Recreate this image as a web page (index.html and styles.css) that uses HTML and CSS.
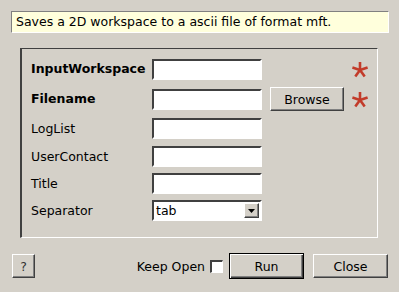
FILE: index.html
```html
<!DOCTYPE html>
<html>
<head>
<meta charset="utf-8">
<link rel="stylesheet" href="styles.css">
</head>
<body>
<div class="dialog">
  <div class="tip">Saves a 2D workspace to a ascii file of format mft.</div>
  <div class="group">
    <div class="grid">
      <div class="label bold">InputWorkspace</div>
      <div class="field"><div class="input"></div></div>
      <div></div>
      <div class="req"><svg width="18" height="17" viewBox="-9 -9 18 17"><g stroke="#c23b2a" stroke-width="2.6" stroke-linecap="butt"><line x1="0" y1="0" x2="0" y2="-8"/><line x1="0" y1="0" x2="7.6" y2="-2.5"/><line x1="0" y1="0" x2="4.7" y2="6.5"/><line x1="0" y1="0" x2="-4.7" y2="6.5"/><line x1="0" y1="0" x2="-7.6" y2="-2.5"/></g></svg></div>

      <div class="label bold">Filename</div>
      <div class="field"><div class="input"></div></div>
      <div class="cell"><div class="btn browse">Browse</div></div>
      <div class="req"><svg width="18" height="17" viewBox="-9 -9 18 17"><g stroke="#c23b2a" stroke-width="2.6" stroke-linecap="butt"><line x1="0" y1="0" x2="0" y2="-8"/><line x1="0" y1="0" x2="7.6" y2="-2.5"/><line x1="0" y1="0" x2="4.7" y2="6.5"/><line x1="0" y1="0" x2="-4.7" y2="6.5"/><line x1="0" y1="0" x2="-7.6" y2="-2.5"/></g></svg></div>

      <div class="label">LogList</div>
      <div class="field"><div class="input"></div></div>
      <div></div><div></div>

      <div class="label">UserContact</div>
      <div class="field"><div class="input"></div></div>
      <div></div><div></div>

      <div class="label">Title</div>
      <div class="field"><div class="input"></div></div>
      <div></div><div></div>

      <div class="label">Separator</div>
      <div class="field"><div class="input combo"><span class="val">tab</span><span class="arrow"><svg width="7" height="4" viewBox="0 0 7 4"><polygon points="0,0 7,0 3.5,4" fill="#000"/></svg></span></div></div>
      <div></div><div></div>
    </div>
  </div>
  <div class="bottom">
    <div class="btn help">?</div>
    <div class="spacer"></div>
    <div class="keep">Keep Open</div>
    <div class="check"></div>
    <div class="btn run">Run</div>
    <div class="btn close">Close</div>
  </div>
</div>
</body>
</html>
```
FILE: styles.css
```css
html, body {
  margin: 0;
  padding: 0;
  background: #d4d0c8;
}
body {
  width: 399px;
  height: 292px;
  overflow: hidden;
  font-family: "DejaVu Sans", sans-serif;
  font-size: 12.5px;
  color: #000;
}
.dialog {
  display: flex;
  flex-direction: column;
  padding: 11px 11px 0 11px;
}
.tip {
  height: 20px;
  background: #ffffdc;
  border-top: 1px solid #808080;
  border-left: 1px solid #808080;
  border-right: 1px solid #ffffff;
  border-bottom: 1px solid #ffffff;
  padding-left: 4px;
  box-sizing: content-box;
  width: 372px;
  line-height: 20px;
}
.group {
  margin: 15px 0 0 9px;
  width: 346px;
  height: 180px;
  border-top: 1px solid #404040;
  border-left: 2px solid #404040;
  border-right: 1px solid #ffffff;
  border-bottom: 1px solid #ffffff;
  padding: 8px 0 0 9px;
  box-sizing: content-box;
}
.grid {
  display: grid;
  grid-template-columns: 121px 118px 80px 20px;
  grid-template-rows: 24px 24px 23px 21px 21px 21px;
  row-gap: 6px;
  align-items: center;
}
.label {
  white-space: nowrap;
  line-height: 14px;
}
.bold { font-weight: bold; }
.field, .cell, .req {
  display: flex;
  align-items: center;
  height: 100%;
}
.req { justify-content: center; }
.input {
  width: 106px;
  height: 17px;
  background: #fff;
  border-top: 2px solid #404040;
  border-left: 2px solid #404040;
  border-right: 2px solid #ffffff;
  border-bottom: 2px solid #ffffff;
}
.combo {
  display: flex;
  align-items: center;
}
.val {
  padding-left: 2px;
  flex: 1;
  line-height: 17px;
}
.arrow {
  margin-right: 1px;
  background: #d4d0c8;
  border-top: 1px solid #ffffff;
  border-left: 1px solid #ffffff;
  border-right: 1px solid #404040;
  border-bottom: 1px solid #404040;
  box-shadow: inset -1px -1px 0 #808080;
  display: flex;
  align-items: center;
  justify-content: center;
  box-sizing: border-box;
  width: 15px;
  height: 15px;
}
.btn {
  display: flex;
  align-items: center;
  justify-content: center;
  box-sizing: border-box;
  background: #d4d0c8;
  border-top: 1px solid #ffffff;
  border-left: 1px solid #ffffff;
  border-right: 1px solid #404040;
  border-bottom: 1px solid #404040;
  box-shadow: inset -1px -1px 0 #808080;
  color: #000;
}
.browse {
  width: 74px;
  height: 24px;
}
.bottom {
  display: flex;
  align-items: center;
  margin-top: 15px;
  padding-left: 1px;
  height: 26px;
}
.help {
  width: 23px;
  height: 24px;
  color: #333;
}
.spacer { flex: 1; }
.keep {
  margin-right: 5px;
}
.check {
  width: 13px;
  height: 13px;
  box-sizing: border-box;
  background: #fff;
  border-top: 2px solid #404040;
  border-left: 2px solid #404040;
  border-right: 1px solid #ffffff;
  border-bottom: 1px solid #ffffff;
  margin-right: 6px;
}
.run {
  width: 75px;
  height: 26px;
  border: 1px solid #000;
  box-shadow: inset 1px 1px 0 #ffffff, inset -1px -1px 0 #404040, inset -2px -2px 0 #808080;
  margin-right: 9px;
}
.close {
  width: 75px;
  height: 24px;
}
```
